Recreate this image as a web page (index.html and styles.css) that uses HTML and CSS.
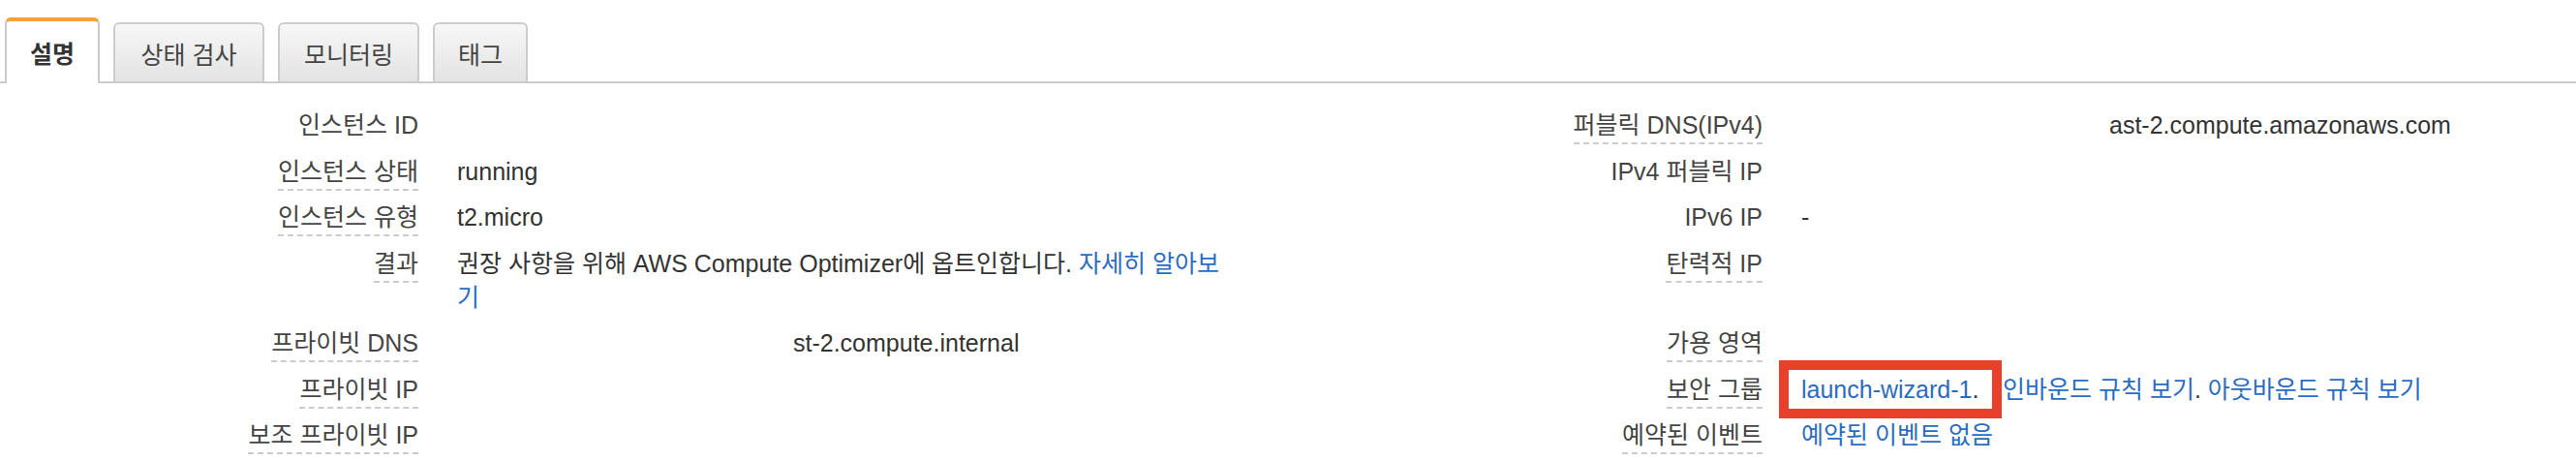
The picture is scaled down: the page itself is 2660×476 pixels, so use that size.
FILE: index.html
```html
<!DOCTYPE html>
<html lang="ko">
<head>
<meta charset="utf-8">
<title>인스턴스 설명</title>
<link rel="stylesheet" href="styles.css">
</head>
<body>
<div class="page">
  <nav class="tabs">
    <div class="tab tab-active tab-w1">설명</div>
    <div class="tab tab-w2">상태 검사</div>
    <div class="tab tab-w3">모니터링</div>
    <div class="tab tab-w4">태그</div>
  </nav>

  <table class="details">
    <colgroup>
      <col class="c-label1">
      <col class="c-value1">
      <col class="c-label2">
      <col class="c-value2">
    </colgroup>
    <tr>
      <th><span class="lbl">인스턴스 ID</span></th>
      <td></td>
      <th><span class="lbl dashed">퍼블릭 DNS(IPv4)</span></th>
      <td><span class="masked-dns">ast-2.compute.amazonaws.com</span></td>
    </tr>
    <tr>
      <th><span class="lbl dashed">인스턴스 상태</span></th>
      <td>running</td>
      <th><span class="lbl">IPv4 퍼블릭 IP</span></th>
      <td></td>
    </tr>
    <tr>
      <th><span class="lbl dashed">인스턴스 유형</span></th>
      <td>t2.micro</td>
      <th><span class="lbl">IPv6 IP</span></th>
      <td>-</td>
    </tr>
    <tr>
      <th><span class="lbl dashed">결과</span></th>
      <td><div class="wrap">권장 사항을 위해 AWS Compute Optimizer에 옵트인합니다. <a href="#">자세히 알아보기</a></div></td>
      <th><span class="lbl dashed">탄력적 IP</span></th>
      <td></td>
    </tr>
    <tr>
      <th><span class="lbl dashed">프라이빗 DNS</span></th>
      <td><span class="masked-internal">st-2.compute.internal</span></td>
      <th><span class="lbl dashed">가용 영역</span></th>
      <td></td>
    </tr>
    <tr>
      <th><span class="lbl dashed">프라이빗 IP</span></th>
      <td></td>
      <th><span class="lbl dashed">보안 그룹</span></th>
      <td><span class="sg-name"><a href="#">launch-wizard-1</a>.</span><a href="#">인바운드 규칙 보기</a>. <a href="#">아웃바운드 규칙 보기</a></td>
    </tr>
    <tr>
      <th><span class="lbl dashed">보조 프라이빗 IP</span></th>
      <td></td>
      <th><span class="lbl dashed">예약된 이벤트</span></th>
      <td><a href="#">예약된 이벤트 없음</a></td>
    </tr>
  </table>

  <div class="highlight-box"></div>
</div>
</body>
</html>
```

FILE: styles.css
```css
html, body {
  margin: 0;
  padding: 0;
  background: #ffffff;
}

body {
  font-family: "Liberation Sans", "Noto Sans CJK KR", sans-serif;
  font-size: 25px;
  color: #333333;
}

.page {
  position: relative;
  padding-top: 18px;
}

/* ---------- tabs ---------- */
.tabs {
  display: flex;
  align-items: flex-end;
  gap: 14px;
  height: 66px;
  padding-left: 5px;
  border-bottom: 2px solid #cccccc;
}

.tab {
  box-sizing: border-box;
  height: 61px;
  display: flex;
  align-items: center;
  justify-content: center;
  border: 2px solid #cccccc;
  border-bottom: none;
  border-radius: 6px 6px 0 0;
  background: linear-gradient(#f7f7f7, #e3e3e3);
  font-family: "Noto Sans CJK KR", sans-serif;
  font-size: 25px;
  color: #444444;
}

.tab-active {
  height: 68px;
  margin-bottom: -2px;
  background: #ffffff;
  border-top: 4px solid #f5a03a;
  font-weight: bold;
  color: #333333;
}

.tab-w1 { width: 98px; }
.tab-w2 { width: 156px; }
.tab-w3 { width: 146px; }
.tab-w4 { width: 98px; }

/* ---------- details table ---------- */
.details {
  margin-top: 20px;
  border-collapse: collapse;
  border-spacing: 0;
  table-layout: fixed;
  width: 2660px;
}

.c-label1 { width: 432px; }
.c-value1 { width: 900px; }
.c-label2 { width: 488px; }
.c-value2 { width: 840px; }

.details th,
.details td {
  vertical-align: top;
  line-height: 35px;
  padding: 6px 0 6.5px 0;
}

.details th {
  text-align: right;
  font-weight: normal;
  color: #444444;
  white-space: nowrap;
}

.details td {
  padding-left: 40px;
  color: #333333;
}

.lbl {
  display: inline-block;
}

.lbl.dashed {
  margin-bottom: -2px;
  border-bottom: 2px dashed #cccccc;
}

.wrap {
  width: 795px;
}

.details a {
  color: #2b6cbf;
  text-decoration: none;
}

.sg-name {
  display: inline-block;
  width: 208px;
}

.masked-dns {
  padding-left: 318px;
}

.masked-internal {
  padding-left: 347px;
}

/* annotation overlay drawn on top of the security group link */
.highlight-box {
  position: absolute;
  left: 1837px;
  top: 372px;
  width: 210px;
  height: 40px;
  border: 10px solid #e8402a;
}
```
